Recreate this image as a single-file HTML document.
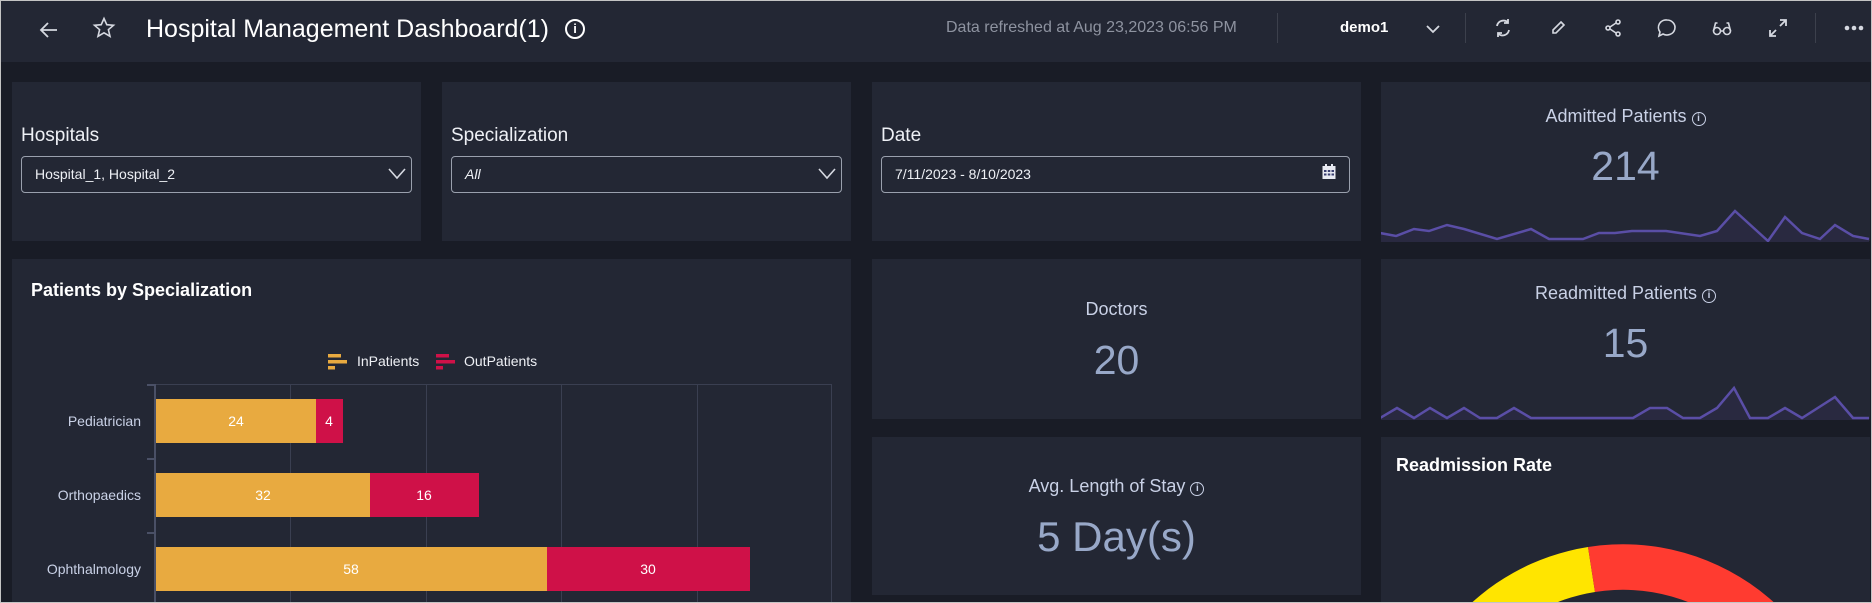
<!DOCTYPE html>
<html><head><meta charset="utf-8"><style>
*{box-sizing:border-box;margin:0;padding:0}
html,body{width:1872px;height:603px;overflow:hidden}
body{background:#191c26;font-family:"Liberation Sans",sans-serif;position:relative;}
.a{position:absolute}
.p{position:absolute;background:#232734}
.lbl{position:absolute;color:#eef0f5;font-size:19px}
.dd{position:absolute;border:1px solid #9aa0ad;border-radius:4px;height:37px;color:#eef0f5;font-size:14px;line-height:35px;padding-left:13px}
.kt{position:absolute;left:0;right:0;text-align:center;color:#c9d1e6;font-size:18px}
.kv{position:absolute;left:0;right:0;text-align:center;color:#98a8c8;font-size:41px}
.info{display:inline-block;width:14px;height:14px;border:1.5px solid #c9d1e6;border-radius:50%;font-size:10px;line-height:11px;text-align:center;font-weight:bold;vertical-align:1px}
.ic{position:absolute;top:17px}
</style></head><body>
<div class="p" style="left:0;top:0;width:1872px;height:62px"></div>
<svg class="a" style="left:38px;top:19px" width="22" height="22" viewBox="0 0 22 22" fill="none" stroke="#d5d8e0" stroke-width="1.8"><path d="M19 11H4M10 4l-7 7 7 7"/></svg>
<svg class="a" style="left:92px;top:16px" width="24" height="24" viewBox="0 0 24 24" fill="none" stroke="#d5d8e0" stroke-width="1.6"><path d="M12 2.5l2.8 6.2 6.7.6-5.1 4.4 1.6 6.6L12 16.8l-6 3.5 1.6-6.6-5.1-4.4 6.7-.6z"/></svg>
<div class="a" style="left:146px;top:15px;color:#fff;font-size:25px">Hospital Management Dashboard(1)</div>
<div class="a" style="left:565px;top:19px;width:20px;height:20px;border:2px solid #fff;border-radius:50%;color:#fff;font-size:13px;font-weight:bold;text-align:center;line-height:16px">i</div>
<div class="a" style="left:946px;top:19px;color:#8e93a0;font-size:16px">Data refreshed at Aug 23,2023 06:56 PM</div>
<div class="a" style="left:1277px;top:13px;width:1px;height:30px;background:#3c404c"></div>
<div class="a" style="left:1340px;top:19px;color:#fff;font-size:15px;font-weight:bold">demo1</div>
<svg class="a" style="left:1425px;top:22px" width="16" height="14" viewBox="0 0 16 14" fill="none" stroke="#d5d8e0" stroke-width="1.8"><path d="M2 4l6 6 6-6"/></svg>
<div class="a" style="left:1465px;top:13px;width:1px;height:30px;background:#3c404c"></div>
<svg class="ic" style="left:1493px" width="20" height="22" viewBox="0 0 20 22" fill="none" stroke="#d5d8e0" stroke-width="1.8"><path d="M4 9a6.5 6.5 0 0 1 11-3.5M16 13a6.5 6.5 0 0 1-11 3.5M15 2v4h-4M5 20v-4h4"/></svg>
<svg class="ic" style="left:1548px" width="20" height="22" viewBox="0 0 20 22" fill="none" stroke="#d5d8e0" stroke-width="1.6"><path d="M13 5l3 3-8 8H5v-3z"/></svg>
<svg class="ic" style="left:1603px" width="20" height="22" viewBox="0 0 20 22" fill="none" stroke="#d5d8e0" stroke-width="1.6"><circle cx="15" cy="5" r="2"/><circle cx="5" cy="11" r="2"/><circle cx="15" cy="17" r="2"/><path d="M7 10l6-4M7 12l6 4"/></svg>
<svg class="ic" style="left:1656px" width="22" height="22" viewBox="0 0 22 22" fill="none" stroke="#d5d8e0" stroke-width="1.6"><path d="M11 3a8 7.5 0 1 1-4 14l-4 2 1-4A7.5 7.5 0 0 1 11 3z"/></svg>
<svg class="ic" style="left:1711px" width="22" height="22" viewBox="0 0 22 22" fill="none" stroke="#d5d8e0" stroke-width="1.6"><circle cx="6" cy="14" r="3.5"/><circle cx="16" cy="14" r="3.5"/><path d="M2.5 14l2-8h2M19.5 14l-2-8h-2M9.5 14h3"/></svg>
<svg class="ic" style="left:1767px" width="22" height="22" viewBox="0 0 22 22" fill="none" stroke="#d5d8e0" stroke-width="1.8"><path d="M13 3h6v6M19 3l-6 6M9 19H3v-6M3 19l6-6"/></svg>
<div class="a" style="left:1815px;top:13px;width:1px;height:30px;background:#3c404c"></div>
<svg class="a" style="left:1844px;top:25px" width="20" height="6" viewBox="0 0 20 6" fill="#d5d8e0"><circle cx="3" cy="3" r="2.3"/><circle cx="10" cy="3" r="2.3"/><circle cx="17" cy="3" r="2.3"/></svg>

<div class="p" style="left:12px;top:82px;width:409px;height:159px"></div>
<div class="lbl" style="left:21px;top:125px">Hospitals</div>
<div class="dd" style="left:21px;top:156px;width:391px">Hospital_1, Hospital_2</div>
<svg class="a" style="left:388px;top:168px" width="18" height="12" viewBox="0 0 18 12" fill="none" stroke="#d5d8e0" stroke-width="1.6"><path d="M1 1l8 9 8-9"/></svg>

<div class="p" style="left:442px;top:82px;width:409px;height:159px"></div>
<div class="lbl" style="left:451px;top:125px">Specialization</div>
<div class="dd" style="left:451px;top:156px;width:391px;font-style:italic">All</div>
<svg class="a" style="left:818px;top:168px" width="18" height="12" viewBox="0 0 18 12" fill="none" stroke="#d5d8e0" stroke-width="1.6"><path d="M1 1l8 9 8-9"/></svg>

<div class="p" style="left:872px;top:82px;width:489px;height:159px"></div>
<div class="lbl" style="left:881px;top:125px">Date</div>
<div class="dd" style="left:881px;top:156px;width:469px">7/11/2023 - 8/10/2023</div>
<svg class="a" style="left:1322px;top:164px" width="14" height="16" viewBox="0 0 14 16"><rect x="0.5" y="2" width="13" height="13" fill="#e8eaf2" /><rect x="3" y="0" width="2" height="4" fill="#e8eaf2"/><rect x="9" y="0" width="2" height="4" fill="#e8eaf2"/><g fill="#3a3f70"><rect x="2" y="6" width="2.5" height="2"/><rect x="5.8" y="6" width="2.5" height="2"/><rect x="9.5" y="6" width="2.5" height="2"/><rect x="2" y="9.5" width="2.5" height="2"/><rect x="5.8" y="9.5" width="2.5" height="2"/><rect x="9.5" y="9.5" width="2.5" height="2"/></g></svg>

<div class="p" style="left:1381px;top:82px;width:489px;height:159px">
<div class="kt" style="top:24px">Admitted Patients <span class="info">i</span></div>
<div class="kv" style="top:61px">214</div>
</div>
<svg class="a" style="left:1381px;top:200px" width="489" height="42" viewBox="1381 200 489 42"><polygon fill="#292940" points="1380,233 1396,236 1414,229 1429,231 1447,225 1464,229 1497,239 1531,229 1549,239 1583,239 1599,233 1615,233 1632,231 1666,231 1700,236 1717,231 1735,211 1768,241 1785,217 1802,233 1820,239 1835,225 1853,236 1869,239 1869,242 1380,242"/><polyline fill="none" stroke="#5a4ea6" stroke-width="2.5" points="1380,233 1396,236 1414,229 1429,231 1447,225 1464,229 1497,239 1531,229 1549,239 1583,239 1599,233 1615,233 1632,231 1666,231 1700,236 1717,231 1735,211 1768,241 1785,217 1802,233 1820,239 1835,225 1853,236 1869,239"/></svg>

<div class="p" style="left:12px;top:259px;width:839px;height:344px"></div>
<div class="a" style="left:31px;top:280px;color:#fff;font-size:18px;font-weight:bold">Patients by Specialization</div>
<svg class="a" style="left:0;top:340px" width="860" height="263" viewBox="0 340 860 263">
<g fill="#e8aa40"><rect x="328" y="354" width="13" height="3.5"/><rect x="328" y="360" width="19" height="3.5"/><rect x="328" y="366" width="7" height="3.5"/></g>
<g fill="#cf1148"><rect x="436" y="354" width="13" height="3.5"/><rect x="436" y="360" width="19" height="3.5"/><rect x="436" y="366" width="7" height="3.5"/></g>
<text x="357" y="366" fill="#eef0f5" font-size="14" font-family="Liberation Sans">InPatients</text>
<text x="464" y="366" fill="#eef0f5" font-size="14" font-family="Liberation Sans">OutPatients</text>
<g stroke="#3a3f51" stroke-width="1"><line x1="154" y1="384.5" x2="832" y2="384.5"/><line x1="290.5" y1="384" x2="290.5" y2="603"/><line x1="426.5" y1="384" x2="426.5" y2="603"/><line x1="561.5" y1="384" x2="561.5" y2="603"/><line x1="697.5" y1="384" x2="697.5" y2="603"/><line x1="831.5" y1="384" x2="831.5" y2="603"/></g>
<g stroke="#4a5066" stroke-width="2"><line x1="155" y1="384" x2="155" y2="603"/><line x1="147" y1="385" x2="155" y2="385"/><line x1="147" y1="459" x2="155" y2="459"/><line x1="147" y1="533" x2="155" y2="533"/></g>
<rect x="156" y="399" width="160" height="44" fill="#e8aa40"/><rect x="316" y="399" width="27" height="44" fill="#cf1148"/>
<rect x="156" y="473" width="214" height="44" fill="#e8aa40"/><rect x="370" y="473" width="109" height="44" fill="#cf1148"/>
<rect x="156" y="547" width="391" height="44" fill="#e8aa40"/><rect x="547" y="547" width="203" height="44" fill="#cf1148"/>
<g fill="#fff" font-size="14" font-family="Liberation Sans" text-anchor="middle"><text x="236" y="426">24</text><text x="329" y="426">4</text><text x="263" y="500">32</text><text x="424" y="500">16</text><text x="351" y="574">58</text><text x="648" y="574">30</text></g>
<g fill="#c9d1e6" font-size="14" font-family="Liberation Sans" text-anchor="end"><text x="141" y="426">Pediatrician</text><text x="141" y="500">Orthopaedics</text><text x="141" y="574">Ophthalmology</text></g>
</svg>

<div class="p" style="left:872px;top:259px;width:489px;height:160px">
<div class="kt" style="top:40px">Doctors</div>
<div class="kv" style="top:78px">20</div>
</div>
<div class="p" style="left:872px;top:437px;width:489px;height:158px">
<div class="kt" style="top:39px">Avg. Length of Stay <span class="info">i</span></div>
<div class="kv" style="top:76px;font-size:42px">5 Day(s)</div>
</div>

<div class="p" style="left:1381px;top:259px;width:489px;height:160px">
<div class="kt" style="top:24px">Readmitted Patients <span class="info">i</span></div>
<div class="kv" style="top:61px">15</div>
</div>
<svg class="a" style="left:1381px;top:380px" width="489" height="40" viewBox="1381 380 489 40"><polygon fill="#292940" points="1380,418 1397,408 1414,418 1430,408 1447,418 1464,408 1480,418 1497,418 1514,408 1531,418 1633,418 1650,408 1667,408 1683,418 1700,418 1717,408 1734,388 1750,418 1768,418 1785,408 1802,418 1835,397 1853,418 1869,418 1869,420 1380,420"/><polyline fill="none" stroke="#5a4ea6" stroke-width="2.5" points="1380,418 1397,408 1414,418 1430,408 1447,418 1464,408 1480,418 1497,418 1514,408 1531,418 1633,418 1650,408 1667,408 1683,418 1700,418 1717,408 1734,388 1750,418 1768,418 1785,408 1802,418 1835,397 1853,418 1869,418"/></svg>

<div class="p" style="left:1381px;top:437px;width:489px;height:166px;overflow:hidden">
<div class="a" style="left:15px;top:18px;color:#fff;font-size:18px;font-weight:bold">Readmission Rate</div>
<svg class="a" style="left:0;top:0" width="489" height="166" viewBox="1381 437 489 166">
<path d="M1398 769 A225 225 0 0 1 1588 547 L1595 592 A179 179 0 0 0 1444 769 Z" fill="#ffe500"/>
<path d="M1588 547 A225 225 0 0 1 1848 769 L1802 769 A179 179 0 0 0 1595 592 Z" fill="#ff3b30"/>
</svg>
</div>
<div class="a" style="left:0;top:0;width:1872px;height:603px;border:1px solid #c4c4c4;pointer-events:none"></div>
</body></html>
